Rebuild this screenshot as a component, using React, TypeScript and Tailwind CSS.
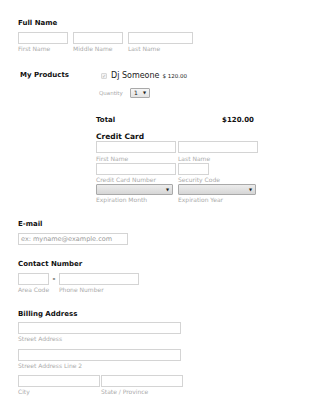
const font = { fontFamily: '"DejaVu Sans", Verdana, sans-serif' };

function Box({ className = "" }: { className?: string }) {
  return <div className={`h-[12px] border border-[#d4d4d4] bg-white ${className}`} />;
}

function Sub({ children, className = "" }: { children: React.ReactNode; className?: string }) {
  return <div className={`text-[6px] leading-[7px] text-[#ababab] mt-[1px] whitespace-nowrap ${className}`}>{children}</div>;
}

function Title({ children, className = "" }: { children: React.ReactNode; className?: string }) {
  return <div className={`text-[7px] leading-[10px] font-bold text-[#111] ${className}`}>{children}</div>;
}

function FakeSelect({ className = "" }: { className?: string }) {
  return (
    <div className={`h-[11px] border border-[#a9a9a9] rounded-[1px] bg-gradient-to-b from-[#ececec] to-[#d6d6d6] flex items-center justify-end pr-[3px] ${className}`}>
      <span className="text-[4px] leading-none text-[#222]">▼</span>
    </div>
  );
}

export default function App() {
  return (
    <div className="w-[325px] h-[400px] bg-white overflow-hidden pl-[18px] pt-[18px]" style={font}>
      {/* Full Name */}
      <Title>Full Name</Title>
      <div className="flex mt-[4px]">
        <div className="w-[50px]">
          <Box />
          <Sub>First Name</Sub>
        </div>
        <div className="w-[50px] ml-[5px]">
          <Box />
          <Sub>Middle Name</Sub>
        </div>
        <div className="w-[65px] ml-[5px]">
          <Box />
          <Sub>Last Name</Sub>
        </div>
      </div>

      {/* My Products */}
      <div className="flex mt-[18px]">
        <div className="w-[78px] pl-[2px]">
          <Title>My Products</Title>
        </div>
        <div className="flex-1">
          <div className="flex items-center h-[10px] mt-[1px] ml-[5px]">
            <div className="w-[6px] h-[6px] border border-[#d8d8d8] rounded-[1px] bg-[#f4f4f4] flex items-center justify-center">
              <span className="text-[5px] leading-none text-[#aaa]">✓</span>
            </div>
            <span className="ml-[4px] text-[8px] leading-[10px] text-[#222]">Dj Someone</span>
            <span className="ml-[3px] text-[5.5px] leading-[10px] text-[#222]">$ 120.00</span>
          </div>
          <div className="flex items-center h-[10px] mt-[7px] ml-[3px]">
            <span className="text-[5.5px] text-[#aaa] w-[31px]">Quantity</span>
            <div className="w-[20px] h-[10px] border border-[#a9a9a9] rounded-[1px] bg-gradient-to-b from-[#f6f6f6] to-[#e2e2e2] flex items-center justify-between px-[3px]">
              <span className="text-[6px] leading-none text-[#111]">1</span>
              <span className="text-[4px] leading-none text-[#222]">▼</span>
            </div>
          </div>

          {/* Total */}
          <div className="flex justify-between w-[158px] mt-[17px]">
            <Title>Total</Title>
            <Title>$120.00</Title>
          </div>

          {/* Credit Card */}
          <div className="text-[7.5px] leading-[8px] font-bold text-[#111] mt-[8px]">Credit Card</div>
          <div className="flex">
            <div className="w-[80px]">
              <Box />
              <Sub className="mt-[2px]">First Name</Sub>
            </div>
            <div className="w-[80px] ml-[2px]">
              <Box />
              <Sub className="mt-[2px]">Last Name</Sub>
            </div>
          </div>
          <div className="flex mt-[1px]">
            <div className="w-[80px]">
              <Box />
              <Sub>Credit Card Number</Sub>
            </div>
            <div className="w-[31px] ml-[2px]">
              <Box />
              <Sub>Security Code</Sub>
            </div>
          </div>
          <div className="flex mt-[1px]">
            <div className="w-[80px]">
              <FakeSelect className="w-[77px]" />
              <Sub>Expiration Month</Sub>
            </div>
            <div className="w-[80px] ml-[2px]">
              <FakeSelect className="w-[78px]" />
              <Sub>Expiration Year</Sub>
            </div>
          </div>
        </div>
      </div>

      {/* E-mail */}
      <Title className="mt-[16px]">E-mail</Title>
      <div className="mt-[4px] w-[110px] h-[12px] border border-[#d4d4d4] flex items-center pl-[2px]">
        <span className="text-[6.5px] leading-none text-[#999]">ex: myname@example.com</span>
      </div>

      {/* Contact Number */}
      <Title className="mt-[14px]">Contact Number</Title>
      <div className="flex mt-[4px]">
        <div className="w-[31px]">
          <Box />
          <Sub>Area Code</Sub>
        </div>
        <div className="w-[10px] text-center text-[7px] leading-[12px] font-bold text-[#333]">-</div>
        <div className="w-[80px]">
          <Box />
          <Sub>Phone Number</Sub>
        </div>
      </div>

      {/* Billing Address */}
      <Title className="mt-[16px]">Billing Address</Title>
      <div className="w-[163px] mt-[3px]">
        <Box />
        <Sub>Street Address</Sub>
      </div>
      <div className="w-[163px] mt-[7px]">
        <Box />
        <Sub>Street Address Line 2</Sub>
      </div>
      <div className="flex mt-[6px]">
        <div className="w-[82px]">
          <Box />
          <Sub>City</Sub>
        </div>
        <div className="w-[82px] ml-[1px]">
          <Box />
          <Sub>State / Province</Sub>
        </div>
      </div>
    </div>
  );
}
